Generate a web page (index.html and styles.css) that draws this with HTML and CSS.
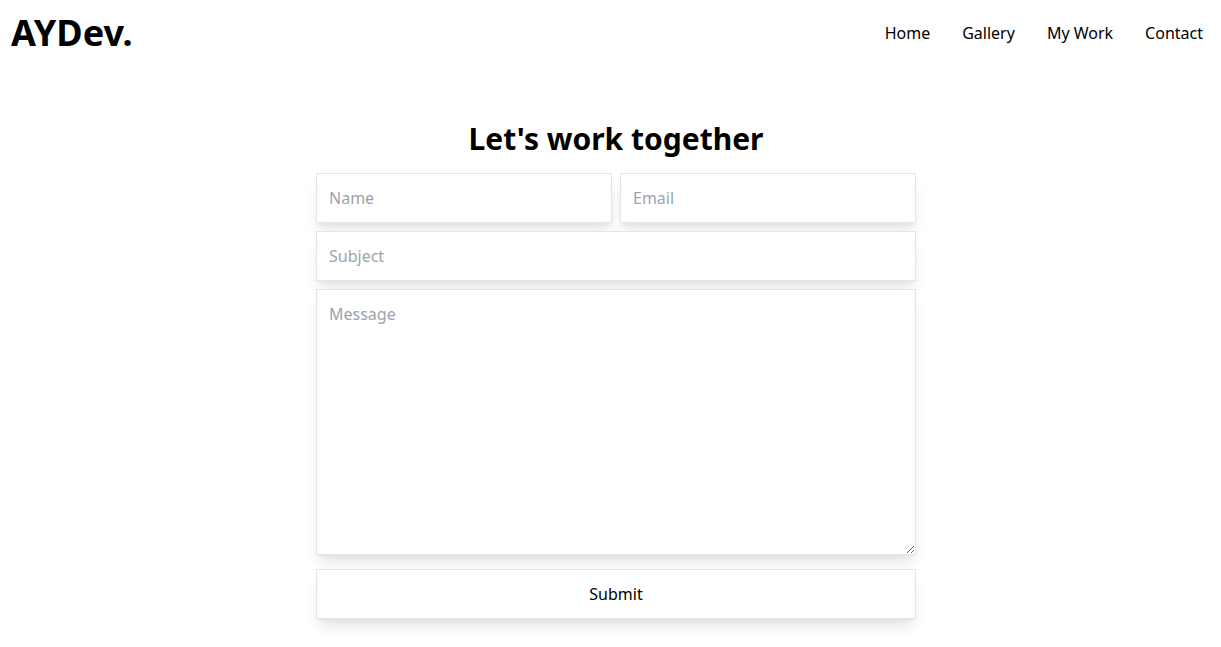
FILE: index.html
```
<!DOCTYPE html>
<html lang="en">
<head>
<meta charset="utf-8">
<meta name="viewport" content="width=device-width, initial-scale=1">
<title>AYDev.</title>
<link rel="stylesheet" href="styles.css">
</head>
<body>
<header class="header">
  <h1 class="logo">AYDev.</h1>
  <nav class="nav">
    <a class="nav-link" href="#home">Home</a>
    <a class="nav-link" href="#gallery">Gallery</a>
    <a class="nav-link" href="#work">My Work</a>
    <a class="nav-link" href="#contact">Contact</a>
  </nav>
</header>
<main class="page">
  <section class="contact" id="contact">
    <h2 class="title">Let's work together</h2>
    <form class="form">
      <div class="row">
        <input class="field" type="text" placeholder="Name" aria-label="Name">
        <input class="field" type="email" placeholder="Email" aria-label="Email">
      </div>
      <input class="field" type="text" placeholder="Subject" aria-label="Subject">
      <textarea class="field message" rows="10" placeholder="Message" aria-label="Message"></textarea>
      <button class="field submit" type="submit">Submit</button>
    </form>
  </section>
</main>
</body>
</html>
```
FILE: styles.css
```
* {
  box-sizing: border-box;
}

body {
  margin: 0;
  background: #fff;
  color: #000;
  font-family: "Noto Sans", sans-serif;
  font-size: 16px;
  line-height: 24px;
}

.header {
  display: flex;
  justify-content: space-between;
  align-items: center;
  padding: 13px 18px 13px 11px;
}

.logo {
  margin: 0;
  font-size: 36px;
  line-height: 40px;
  font-weight: 700;
}

.nav {
  display: flex;
  gap: 32px;
}

.nav-link {
  color: inherit;
  text-decoration: none;
}

.page {
  padding: 55px 0 28px 11px;
}

.contact {
  max-width: 600px;
  margin: 0 auto;
}

.title {
  margin: 0;
  padding-bottom: 16px;
  font-size: 30px;
  line-height: 36px;
  font-weight: 700;
  text-align: center;
}

.form {
  display: grid;
  gap: 8px;
}

.row {
  display: grid;
  grid-template-columns: 1fr 1fr;
  gap: 8px;
}

.field {
  display: block;
  width: 100%;
  min-width: 0;
  margin: 0;
  padding: 12px;
  border: 1px solid #e5e5e5;
  border-radius: 0;
  background: #fff;
  color: inherit;
  font: inherit;
  box-shadow: 0 10px 15px -3px rgba(0, 0, 0, 0.1), 0 4px 6px -2px rgba(0, 0, 0, 0.05);
}

.field::placeholder {
  color: #9ca3af;
}

.message {
  resize: vertical;
}

.submit {
  margin-top: 6px;
  cursor: pointer;
}
```
